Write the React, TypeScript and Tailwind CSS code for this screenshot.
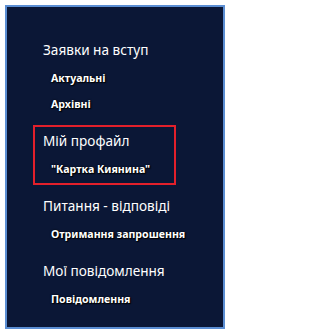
const groups = [
  { title: "Заявки на вступ", items: ["Актуальні", "Архівні"] },
  { title: "Мій профайл", items: ['"Картка Киянина"'], active: true },
  { title: "Питання - відповіді", items: ["Отримання запрошення"] },
  { title: "Мої повідомлення", items: ["Повідомлення"] },
];

export default function App() {
  return (
    <div className="w-[230px] h-[334px] bg-white pt-[5px] pl-[5px] font-['Noto_Sans',sans-serif]">
      <div className="w-[220px] h-[324px] border-2 border-[#5b8ed3] bg-[#0b1736] pt-[27px] pl-[26px] flex flex-col gap-[5px]">
        {groups.map((g) => (
          <div
            key={g.title}
            className={
              "border-2 px-[8px] pt-[4px] pb-[1px] whitespace-nowrap " +
              (g.active ? "border-[#e3202b] w-[143px]" : "border-transparent")
            }
          >
            <div className="text-[13.6px] leading-[20px] text-white">{g.title}</div>
            <div className="mt-[5px] pl-[8px]">
              {g.items.map((it) => (
                <div
                  key={it}
                  className="text-[10.6px] leading-[26px] font-bold text-white [text-shadow:1px_1px_1px_#000,0_0_2px_#000]"
                >
                  {it}
                </div>
              ))}
            </div>
          </div>
        ))}
      </div>
    </div>
  );
}
